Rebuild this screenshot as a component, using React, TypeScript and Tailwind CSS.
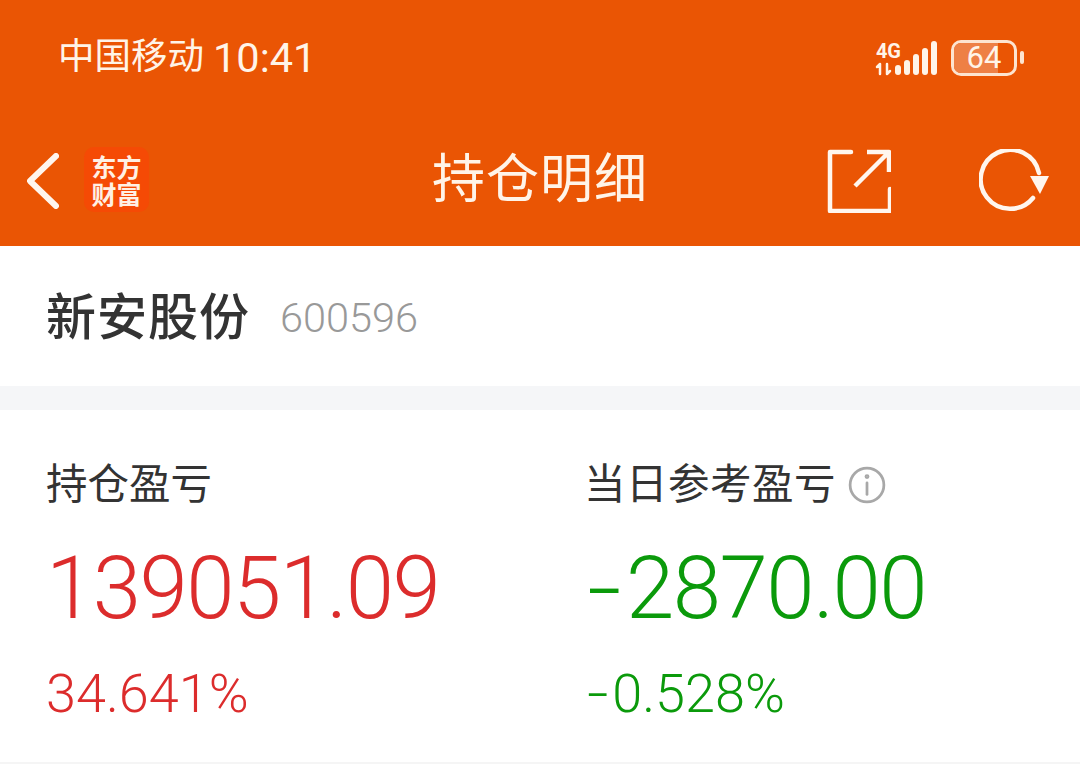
import React from "react";

const font = "font-['Roboto','Noto_Sans_CJK_SC',sans-serif]";

const SignalIcon = () => (
	<svg width="62" height="38" viewBox="0 0 62 38" fill="none" className="overflow-visible">
		<text x="0" y="19" fontSize="20" fontWeight="700" fill="#fff4e8" fontFamily="Roboto, sans-serif" textLength="25">
			4G
		</text>
		<path d="M4 25v10M1 28l3-3M11 25v10M11 35l3-3" stroke="#fff4e8" strokeWidth="2.5" strokeLinecap="round" />
		<g fill="#fff4e8">
			<rect x="19" y="26" width="6" height="10" rx="3" />
			<rect x="28" y="21" width="6" height="15" rx="3" />
			<rect x="37" y="15" width="6" height="21" rx="3" />
			<rect x="46" y="9" width="6" height="27" rx="3" />
			<rect x="55" y="2" width="6" height="34" rx="3" />
		</g>
	</svg>
);

const Battery = () => (
	<div className="flex items-center gap-[3px]">
		<div className="relative flex h-[36px] w-[66px] items-center justify-center overflow-hidden rounded-[10px] border-[3px] border-[#fde4d0]">
			<div className="absolute inset-y-0 left-0 w-[44px] bg-[#ee8045]" />
			<span className={`relative text-[31px] leading-none font-normal text-[#fff4e8] ${font}`}>64</span>
		</div>
		<div className="h-[13px] w-[4px] rounded-sm bg-[#fde4d0]" />
	</div>
);

const Logo = () => (
	<div className="flex h-[65px] w-[65px] -translate-y-px items-center justify-center rounded-[10px] bg-[#f54a05] font-['Noto_Sans_CJK_SC',sans-serif]">
		<span className="w-[50px] text-center text-[25px] leading-[27px] font-bold text-[#fff0e4]">东方财富</span>
	</div>
);

const ShareIcon = () => (
	<svg width="64" height="64" viewBox="0 0 64 64" fill="none" stroke="#fff6ee" strokeWidth="4.5" strokeLinecap="round" strokeLinejoin="round">
		<path d="M24 3H3v59h60V40" />
		<path d="M28 37L61 4M40 3h22v20" strokeLinecap="butt" />
	</svg>
);

const RefreshIcon = () => (
	<svg width="72" height="64" viewBox="0 0 72 64" fill="none">
		<path d="M54 49A29.5 29.5 0 1 1 60 24" stroke="#fff6ee" strokeWidth="4.5" strokeLinecap="round" />
		<path d="M51 27h19l-9 18z" fill="#fff6ee" />
	</svg>
);

// the app draws its minus sign longer than a normal hyphen
const Signed = ({ text }: { text: string }) =>
	text.startsWith("-") ? (
		<>
			<span className="mr-[0.18em] inline-block origin-left scale-x-[1.4]">-</span>
			{text.slice(1)}
		</>
	) : (
		<>{text}</>
	);

const Stat = ({
	label,
	value,
	percent,
	color,
	info,
}: {
	label: string;
	value: string;
	percent: string;
	color: string;
	info?: boolean;
}) => (
	<div className="flex flex-col">
		<div className="flex h-[48px] items-center gap-[12px] text-[41.5px] leading-none text-[#333333]">
			<span className={info ? "-ml-[3px] tracking-[0.5px]" : ""}>{label}</span>
			{info && (
				<svg width="38" height="38" viewBox="0 0 36 36" fill="none" stroke="#a8a8a8" strokeWidth="2.6">
					<circle cx="18" cy="18" r="16" />
					<path d="M18 16v11" strokeLinecap="round" />
					<circle cx="18" cy="10" r="1" />
				</svg>
			)}
		</div>
		<div className={`mt-[34px] h-[90px] text-[87px] leading-[90px] font-light tracking-[-1.5px] ${color}`}>
			<Signed text={value} />
		</div>
		<div className={`mt-[29px] text-[54px] leading-[64px] font-light ${color}`}>
			<Signed text={percent} />
		</div>
	</div>
);

export default function App() {
	return (
		<div className={`flex h-[778px] w-[1080px] flex-col overflow-hidden bg-white ${font}`}>
			<header className="flex h-[246px] flex-col bg-[#ea5504] text-[#fff4e8]">
				<div className="flex h-[115px] items-center justify-between pr-[56px] pl-[58px]">
					<div className="flex items-center gap-[9px]">
						<span className="text-[36.5px] leading-none">中国移动</span>
						<span className="text-[41.5px] leading-none">10:41</span>
					</div>
					<div className="flex items-center gap-[13px]">
						<SignalIcon />
						<Battery />
					</div>
				</div>
				<div className="relative flex flex-1 items-center justify-between pr-[29px] pl-[27px]">
					<div className="flex items-center gap-[25px]">
						<svg width="32" height="56" viewBox="0 0 32 56" fill="none" stroke="#fff6ee" strokeWidth="6" strokeLinecap="round" strokeLinejoin="round">
							<path d="M29 3L3 28l26 25" />
						</svg>
						<Logo />
					</div>
					<div className="absolute inset-x-0 text-center text-[53px] leading-none tracking-[1px] text-[#fff4e8]">
						持仓明细
					</div>
					<div className="flex items-center gap-[88px]">
						<ShareIcon />
						<RefreshIcon />
					</div>
				</div>
			</header>

			<div className="flex h-[140px] items-center gap-[30px] pt-[4px] pl-[46px]">
				<span className="text-[50px] leading-none font-medium tracking-[1px] text-[#333333]">新安股份</span>
				<span className="text-[41.5px] leading-none font-light text-[#999999]">600596</span>
			</div>

			<div className="h-[24px] bg-[#f5f6f8]" />

			<div className="grid h-[354px] grid-cols-[541px_1fr] border-b-2 border-[#f5f5f5] pt-[51px] pl-[46px]">
				<Stat label="持仓盈亏" value="139051.09" percent="34.641%" color="text-[#dc2c2c]" />
				<Stat label="当日参考盈亏" value="-2870.00" percent="-0.528%" color="text-[#0b9a0b]" info />
			</div>
		</div>
	);
}
